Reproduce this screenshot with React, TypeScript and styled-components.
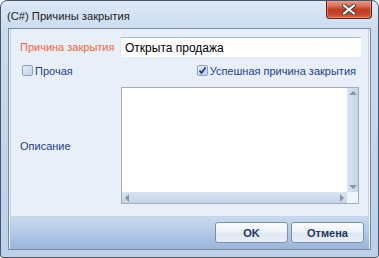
import styled, { createGlobalStyle } from "styled-components";

const Global = createGlobalStyle`
  html, body { margin: 0; padding: 0; background: #ffffff; }
  body { font-family: "Liberation Sans", Arial, sans-serif; }
`;

const Window = styled.div`
  box-sizing: border-box;
  width: 379px;
  height: 258px;
  border: 1px solid #4a5566;
  border-radius: 7px 7px 3px 3px;
  background: linear-gradient(180deg, #dde8f5 0%, #c9dbef 12%, #bcd0ea 100%);
  display: flex;
  flex-direction: column;
  overflow: hidden;
`;

const TitleBar = styled.div`
  height: 27px;
  display: flex;
  align-items: flex-start;
  padding-left: 6px;
  padding-right: 6px;
`;

const Title = styled.div`
  flex: 1;
  margin-top: 9px;
  font-size: 11.2px;
  color: #1b1b1b;
`;

const CloseButton = styled.div`
  box-sizing: border-box;
  width: 46px;
  height: 19px;
  margin-top: -1px;
  border: 1px solid #5e2118;
  border-top: none;
  border-radius: 0 0 4px 4px;
  background: linear-gradient(180deg, #e9a695 0%, #d9694f 35%, #bf3a22 55%, #c9462b 80%, #d8664a 100%);
  box-shadow: inset 0 0 0 1px rgba(255, 200, 185, 0.4);
  display: flex;
  align-items: center;
  justify-content: center;
`;

const Client = styled.div`
  box-sizing: border-box;
  height: 222px;
  margin: 0 7px;
  border: 1px solid #7a8aa0;
  background: #e9eff8;
  display: flex;
  flex-direction: column;
  padding: 0 1px;
`;

const Panel = styled.div`
  box-sizing: border-box;
  height: 188px;
  border: 1px solid #c8d4e4;
  border-top: none;
  background: #e9eff8;
  display: grid;
  grid-template-columns: 100px 1fr;
  grid-template-rows: 20px 16px 117px;
  row-gap: 7px;
  padding: 8px 7px 0 9px;
`;

const Label = styled.div<{ $tone?: "accent" | "plain" }>`
  font-size: 11px;
  color: ${p => (p.$tone === "accent" ? "#f0653a" : "#1f3f8c")};
  display: flex;
  align-items: center;
  white-space: nowrap;
`;

const Input = styled.div`
  box-sizing: border-box;
  height: 20px;
  background: #ffffff;
  border-top: 1px solid #a9bcd6;
  border-left: 1px solid #dfe7f2;
  font-size: 12px;
  color: #000000;
  padding-left: 4px;
  display: flex;
  align-items: center;
`;

const CheckRow = styled.div`
  grid-column: 1 / 3;
  height: 13px;
  display: flex;
  justify-content: space-between;
  align-items: center;
  padding-left: 2px;
  padding-right: 5px;
`;

const CheckItem = styled.label`
  display: flex;
  align-items: center;
  gap: 2px;
  font-size: 11px;
  color: #1f3f8c;
`;

const Box = styled.span`
  box-sizing: border-box;
  width: 11px;
  height: 11px;
  border: 1px solid #8da0bf;
  border-radius: 2px;
  background: linear-gradient(135deg, #e6edf6 0%, #c2d1e6 100%);
  display: flex;
  align-items: center;
  justify-content: center;
`;

const TextBox = styled.div`
  box-sizing: border-box;
  margin: 0 2px 0 1px;
  height: 117px;
  border: 1px solid #a3acb8;
  background: #ffffff;
  display: grid;
  grid-template-columns: 1fr 11px;
  grid-template-rows: 1fr 11px;
`;

const VScroll = styled.div`
  background: linear-gradient(90deg, #dae4f1 0%, #c6d4e8 100%);
  display: flex;
  flex-direction: column;
  justify-content: space-between;
  align-items: center;
  padding: 3px 0;
`;

const HScroll = styled.div`
  background: linear-gradient(180deg, #dae4f1 0%, #c6d4e8 100%);
  display: flex;
  justify-content: space-between;
  align-items: center;
  padding: 0 3px;
`;

const Corner = styled.div`
  background: #f1f4f9;
`;

const Arrow = styled.span<{ $dir: "up" | "down" | "left" | "right" }>`
  width: 0;
  height: 0;
  border-style: solid;
  ${p =>
    p.$dir === "up"
      ? "border-width: 0 4px 4px 4px; border-color: transparent transparent #8794a6 transparent;"
      : p.$dir === "down"
      ? "border-width: 4px 4px 0 4px; border-color: #8794a6 transparent transparent transparent;"
      : p.$dir === "left"
      ? "border-width: 4px 4px 4px 0; border-color: transparent #8794a6 transparent transparent;"
      : "border-width: 4px 0 4px 4px; border-color: transparent transparent transparent #8794a6;"}
`;

const ButtonBar = styled.div`
  flex: 1;
  background: linear-gradient(180deg, #c9d9ee 0%, #b2c8e5 50%, #9bb6db 100%);
  display: flex;
  justify-content: flex-end;
  align-items: flex-start;
  gap: 3px;
  padding: 5px 5px 0 0;
`;

const Button = styled.button`
  box-sizing: border-box;
  width: 73px;
  height: 21px;
  border: 1px solid #7890b2;
  border-radius: 3px;
  background: linear-gradient(180deg, #fbfcfe 0%, #eef3f9 45%, #dfe7f2 55%, #e8eef7 100%);
  font-family: "Liberation Sans", Arial, sans-serif;
  font-size: 11px;
  font-weight: bold;
  color: #1e3660;
  padding: 0;
`;

const App = () => {
  return (
    <>
      <Global />
      <Window>
        <TitleBar>
          <Title>(C#) Причины закрытия</Title>
          <CloseButton>
            <svg width="14" height="11" viewBox="0 0 14 11">
              <path d="M2 1.5 L12 9.5 M12 1.5 L2 9.5" stroke="#3b3b3b" strokeWidth="4" strokeLinecap="square" />
              <path d="M2 1.5 L12 9.5 M12 1.5 L2 9.5" stroke="#ffffff" strokeWidth="2" strokeLinecap="square" />
            </svg>
          </CloseButton>
        </TitleBar>
        <Client>
          <Panel>
            <Label $tone="accent">Причина закрытия</Label>
            <Input>Открыта продажа</Input>
            <CheckRow>
              <CheckItem>
                <Box />
                Прочая
              </CheckItem>
              <CheckItem>
                <Box>
                  <svg width="9" height="9" viewBox="0 0 9 9">
                    <path d="M1.5 4.5 L3.5 7 L7.5 1.5" stroke="#26407e" strokeWidth="1.8" fill="none" />
                  </svg>
                </Box>
                Успешная причина закрытия
              </CheckItem>
            </CheckRow>
            <Label>Описание</Label>
            <TextBox>
              <div />
              <VScroll>
                <Arrow $dir="up" />
                <Arrow $dir="down" />
              </VScroll>
              <HScroll>
                <Arrow $dir="left" />
                <Arrow $dir="right" />
              </HScroll>
              <Corner />
            </TextBox>
          </Panel>
          <ButtonBar>
            <Button>OK</Button>
            <Button>Отмена</Button>
          </ButtonBar>
        </Client>
      </Window>
    </>
  );
};

export default App;
